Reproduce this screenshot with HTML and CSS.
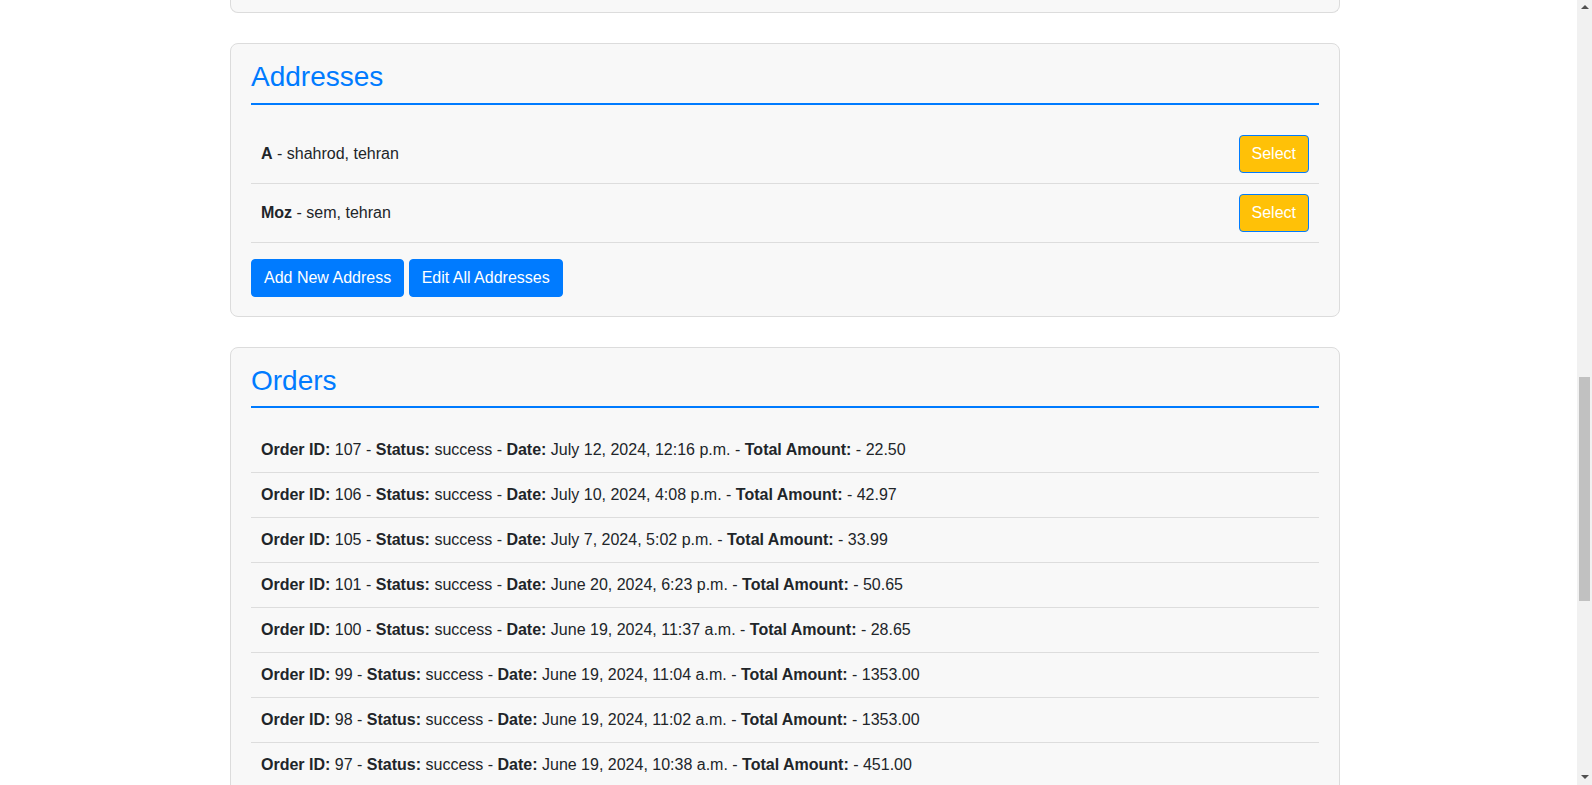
FILE: index.html
```html
<!DOCTYPE html>
<html lang="en">
<head>
<meta charset="utf-8">
<title>Profile</title>
<link rel="stylesheet" href="styles.css">
</head>
<body>
<div class="page">
  <div class="container">
    <div class="card card-tail"></div>

    <section class="card">
      <h3 class="card-title">Addresses</h3>
      <ul class="list">
        <li class="row"><span><b>A</b> - shahrod, tehran</span><button type="button" class="btn btn-select">Select</button></li>
        <li class="row"><span><b>Moz</b> - sem, tehran</span><button type="button" class="btn btn-select">Select</button></li>
      </ul>
      <div class="actions">
        <button type="button" class="btn btn-primary">Add New Address</button>
        <button type="button" class="btn btn-primary">Edit All Addresses</button>
      </div>
    </section>

    <section class="card">
      <h3 class="card-title">Orders</h3>
      <ul class="list">
        <li class="row"><span><b>Order ID:</b> 107 - <b>Status:</b> success - <b>Date:</b> July 12, 2024, 12:16 p.m. - <b>Total Amount:</b> - 22.50</span></li>
        <li class="row"><span><b>Order ID:</b> 106 - <b>Status:</b> success - <b>Date:</b> July 10, 2024, 4:08 p.m. - <b>Total Amount:</b> - 42.97</span></li>
        <li class="row"><span><b>Order ID:</b> 105 - <b>Status:</b> success - <b>Date:</b> July 7, 2024, 5:02 p.m. - <b>Total Amount:</b> - 33.99</span></li>
        <li class="row"><span><b>Order ID:</b> 101 - <b>Status:</b> success - <b>Date:</b> June 20, 2024, 6:23 p.m. - <b>Total Amount:</b> - 50.65</span></li>
        <li class="row"><span><b>Order ID:</b> 100 - <b>Status:</b> success - <b>Date:</b> June 19, 2024, 11:37 a.m. - <b>Total Amount:</b> - 28.65</span></li>
        <li class="row"><span><b>Order ID:</b> 99 - <b>Status:</b> success - <b>Date:</b> June 19, 2024, 11:04 a.m. - <b>Total Amount:</b> - 1353.00</span></li>
        <li class="row"><span><b>Order ID:</b> 98 - <b>Status:</b> success - <b>Date:</b> June 19, 2024, 11:02 a.m. - <b>Total Amount:</b> - 1353.00</span></li>
        <li class="row"><span><b>Order ID:</b> 97 - <b>Status:</b> success - <b>Date:</b> June 19, 2024, 10:38 a.m. - <b>Total Amount:</b> - 451.00</span></li>
      </ul>
    </section>
  </div>
</div>

<aside class="scrollbar" aria-hidden="true">
  <span class="sb-arrow sb-up"></span>
  <span class="sb-thumb"></span>
  <span class="sb-arrow sb-down"></span>
</aside>
</body>
</html>
```

FILE: styles.css
```css
html, body {
  margin: 0;
  padding: 0;
}

html {
  overflow: hidden;
}

body {
  font-family: "Liberation Sans", Arial, Helvetica, sans-serif;
  font-size: 16px;
  line-height: 1.5;
  color: #212529;
  background: #ffffff;
  padding-right: 15px;
}

.page {
  padding: 0 7px 30px 0;
}

.container {
  width: 1110px;
  margin: 0 auto;
}

.card {
  background: #f8f8f8;
  border: 1px solid #dcdcdc;
  border-radius: 8px;
  padding: 16px 20px 19px;
  margin-bottom: 30px;
}

.card-tail {
  height: 12px;
  padding: 0;
  border-top: none;
  border-radius: 0 0 8px 8px;
  box-sizing: border-box;
  height: 13px;
}

.card-title {
  margin: 0 0 20px;
  padding-bottom: 9px;
  border-bottom: 2px solid #007bff;
  color: #007bff;
  font-size: 28px;
  font-weight: 400;
  line-height: 1.2;
}

.list {
  list-style: none;
  margin: 0;
  padding: 0;
}

.row {
  display: flex;
  align-items: center;
  justify-content: space-between;
  padding: 10px;
  border-bottom: 1px solid #dddddd;
}

.row b {
  font-weight: 700;
}

.actions {
  margin-top: 16px;
}

.btn {
  display: inline-block;
  font-family: inherit;
  font-size: 16px;
  line-height: 1.5;
  padding: 6px 12px;
  border: 1px solid transparent;
  border-radius: 4px;
  color: #ffffff;
  cursor: pointer;
  margin: 0;
}

.btn-primary {
  background: #007bff;
  border-color: #007bff;
}

.btn-select {
  background: #ffc107;
  border-color: #007bff;
}

/* classic browser scrollbar drawn over the right edge */
.scrollbar {
  position: fixed;
  top: 0;
  right: 0;
  bottom: 0;
  width: 15px;
  background: #f1f1f1;
}

.sb-arrow {
  position: absolute;
  left: 4px;
  width: 0;
  height: 0;
  border-left: 4px solid transparent;
  border-right: 4px solid transparent;
}

.sb-up {
  top: 5px;
  border-bottom: 4px solid #505050;
}

.sb-down {
  bottom: 6px;
  border-top: 4px solid #505050;
}

.sb-thumb {
  position: absolute;
  top: 377px;
  left: 2px;
  width: 11px;
  height: 224px;
  background: #c1c1c1;
}
```
